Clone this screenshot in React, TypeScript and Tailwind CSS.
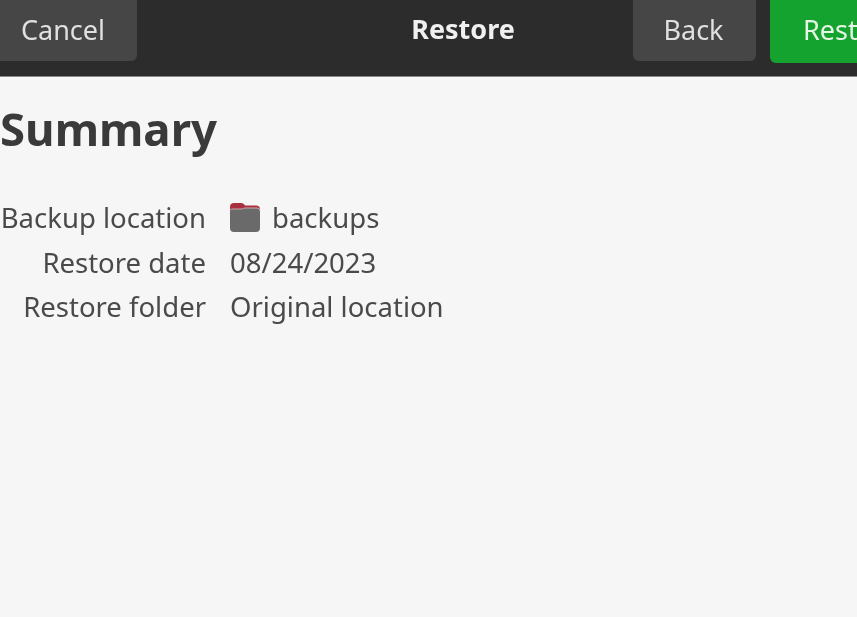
import React from 'react';

const FONT = "font-['Noto_Sans','Open_Sans',sans-serif]";

function FolderIcon() {
  return (
    <svg width="34" height="32" viewBox="0 0 34 32" className="-ml-[2px] mb-[2px] shrink-0">
      <path d="M2 6a4 4 0 0 1 4-4h7c2 0 3 1 4 2.500h11a4 4 0 0 1 4 4V11H2z" fill="#a8303f" />
      <path d="M2 9.500c0-1 1-1.500 2-1.500h9c2 0 2.500-1 4-1h12a3 3 0 0 1 3 3V27a4 4 0 0 1-4 4H6a4 4 0 0 1-4-4z" fill="#6b6a6b" />
      <path d="M2 9.500c0-1 1-1.500 2-1.500h9c2 0 2.500-1 4-1h12a3 3 0 0 1 3 3" fill="none" stroke="#c9a9ad" strokeWidth="1" />
    </svg>
  );
}

const rows = [
  { label: 'Backup location', value: 'backups', icon: true },
  { label: 'Restore date', value: '08/24/2023' },
  { label: 'Restore folder', value: 'Original location' },
];

export default function App() {
  return (
    <div className={`h-[617px] w-[857px] overflow-hidden bg-[#f6f6f6] ${FONT} text-[#3d3d3d] blur-[0.6px]`}>
      {/* Header bar */}
      <header className="flex h-[77px] items-start border-b border-[#8a8a8a] bg-[#2c2c2c] text-[27px] leading-none">
        <button className="-ml-3 -mt-2 flex h-[69px] w-[149px] shrink-0 items-center justify-center rounded-md bg-[#464646] pl-[1px] pt-[5px] text-[#e0e0e0]">
          Cancel
        </button>
        <h1 className="ml-[272px] mt-[14px] w-[108px] shrink-0 text-center text-[27px] font-bold leading-[30px] text-[#f0f0f0]">Restore</h1>
        <button className="ml-[116px] -mt-2 flex h-[69px] w-[123px] shrink-0 items-center justify-center rounded-md bg-[#464646] pr-[2px] pt-[5px] text-[#e0e0e0]">
          Back
        </button>
        <button className="ml-[14px] -mt-2 flex h-[71px] w-[170px] shrink-0 items-center rounded-md bg-[#15a32f] pl-[33px] pt-[3px] text-[#e6f5e6]">
          Restore
        </button>
      </header>

      {/* Summary */}
      <main className="pt-[21px]">
        <h2 className="text-[45.5px] font-bold leading-[60px] text-[#3a3a3a]">Summary</h2>
        <div className="mt-[38px] grid grid-cols-[206px_1fr] grid-rows-[45px_44px_44px] gap-x-[24px] text-[27.5px] leading-[44px] text-[#4a4a4a]">
          {rows.map((row) => (
            <React.Fragment key={row.label}>
              <span className="text-right">{row.label}</span>
              <span className="flex h-[44px] items-center gap-[10px]">
                {row.icon && <FolderIcon />}
                {row.value}
              </span>
            </React.Fragment>
          ))}
        </div>
      </main>
    </div>
  );
}
